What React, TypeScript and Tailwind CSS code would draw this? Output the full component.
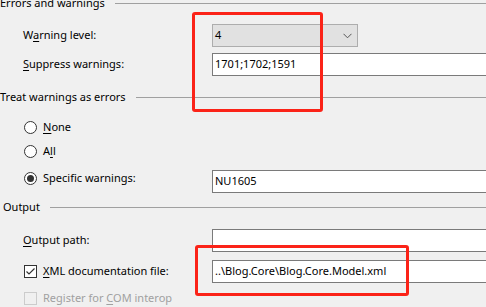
import React from 'react';

const font = { fontFamily: '"Noto Sans", "Open Sans", sans-serif' };

function U({ children }: { children: React.ReactNode }) {
  return <span className="underline underline-offset-[2px] decoration-[1px]">{children}</span>;
}

function GroupHeader({ title, className }: { title: string; className?: string }) {
  return (
    <div className={`flex items-center h-[16px] ${className ?? ''}`}>
      <span className="pr-[10px] leading-[16px]">{title}</span>
      <div className="flex-1 border-t border-[#a0a0a0]" />
    </div>
  );
}

function TextBox({ value }: { value: string }) {
  return (
    <div className="flex-1 h-[23px] bg-white border border-r-0 border-[#7a7a7a] flex items-center pl-[2px] text-black">
      {value}
    </div>
  );
}

function Radio({ checked }: { checked?: boolean }) {
  return (
    <div className="w-[13px] h-[13px] rounded-full border border-[#333] bg-white flex items-center justify-center">
      {checked && <div className="w-[7px] h-[7px] rounded-full bg-[#333]" />}
    </div>
  );
}

function CheckBox({ checked, disabled }: { checked?: boolean; disabled?: boolean }) {
  return (
    <div
      className={`w-[13px] h-[13px] border flex items-center justify-center ${
        disabled ? 'border-[#cccccc] bg-[#f0f0f0]' : 'border-[#333] bg-white'
      }`}
    >
      {checked && (
        <svg width="11" height="11" viewBox="0 0 11 11">
          <path d="M1.5 5.5 L4 8 L9.5 2.5" fill="none" stroke="#333" strokeWidth="1.2" />
        </svg>
      )}
    </div>
  );
}

export default function App() {
  return (
    <div className="w-[486px] h-[307px] bg-[#f0f0f0] overflow-hidden relative text-[11px] text-black" style={font}>
      <div className="flex flex-col">
        <GroupHeader title="Errors and warnings" className="-mt-[5px]" />

        <div className="flex items-center h-[23px] mt-[13px]">
          <div className="w-[212px] pl-[23px]">
            W<U>a</U>rning level:
          </div>
          <div className="w-[146px] h-[23px] bg-[#e1e1e1] border border-[#adadad] flex items-center justify-between pl-[2px] pr-[5px]">
            <span>4</span>
            <svg width="9" height="6" viewBox="0 0 9 6">
              <path d="M0.5 0.8 L4.5 4.8 L8.5 0.8" fill="none" stroke="#555" strokeWidth="1" />
            </svg>
          </div>
        </div>

        <div className="flex items-center h-[23px] mt-[6px]">
          <div className="w-[212px] pl-[23px]">
            <U>S</U>uppress warnings:
          </div>
          <TextBox value="1701;1702;1591" />
        </div>

        <GroupHeader title="Treat warnings as errors" className="mt-[13px]" />

        <div className="flex items-center h-[16px] mt-[14px] pl-[24px] gap-[6px]">
          <Radio />
          <span>
            <U>N</U>one
          </span>
        </div>

        <div className="flex items-center h-[16px] mt-[8px] pl-[24px] gap-[6px]">
          <Radio />
          <span>
            A<U>l</U>l
          </span>
        </div>

        <div className="flex items-start h-[23px] mt-[11px]">
          <div className="w-[212px] pl-[24px] flex items-center h-[16px] gap-[6px]">
            <Radio checked />
            <span>
              Specif<U>i</U>c warnings:
            </span>
          </div>
          <TextBox value="NU1605" />
        </div>

        <GroupHeader title="Output" className="mt-[6px] pl-[3px]" />

        <div className="flex items-center h-[23px] mt-[14px]">
          <div className="w-[212px] pl-[23px]">
            <U>O</U>utput path:
          </div>
          <TextBox value="" />
        </div>

        <div className="flex items-center h-[23px] mt-[8px]">
          <div className="w-[212px] pl-[24px] flex items-center gap-[6px]">
            <CheckBox checked />
            <span>
              <U>X</U>ML documentation file:
            </span>
          </div>
          <TextBox value="..\Blog.Core\Blog.Core.Model.xml" />
        </div>

        <div className="flex items-center h-[16px] mt-[7px] pl-[24px] gap-[6px] text-[#a0a0a0]">
          <CheckBox disabled />
          <span>
            Register for <U>C</U>OM interop
          </span>
        </div>
      </div>

      <div className="absolute left-[192px] top-[12px] w-[131px] h-[100px] border-[3px] border-[#fb2318] rounded-[3px]" />
      <div className="absolute left-[195px] top-[245px] w-[214px] h-[51px] border-[3px] border-[#fb2318] rounded-[3px]" />
    </div>
  );
}
